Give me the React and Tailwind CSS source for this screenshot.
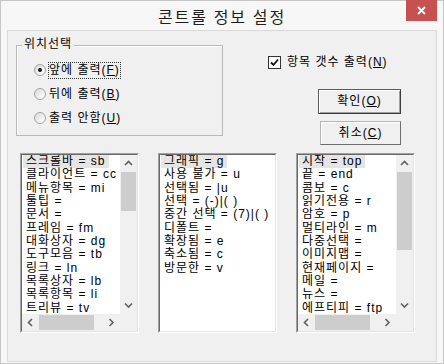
import React from "react";

const leftItems = [
  "스크롤바 = sb",
  "클라이언트 = cc",
  "메뉴항목 = mi",
  "툴팁 =",
  "문서 =",
  "프레임 = fm",
  "대화상자 = dg",
  "도구모음 = tb",
  "링크 = ln",
  "목록상자 = lb",
  "목록항목 = li",
  "트리뷰 = tv",
];

const midItems = [
  "그래픽 = g",
  "사용 불가 = u",
  "선택됨 = |u",
  "선택 = (-)|( )",
  "중간 선택 = (7)|( )",
  "디폴트 =",
  "확장됨 = e",
  "축소됨 = c",
  "방문한 = v",
];

const rightItems = [
  "시작 = top",
  "끝 = end",
  "콤보 = c",
  "읽기전용 = r",
  "암호 = p",
  "멀티라인 = m",
  "다중선택 =",
  "이미지맵 =",
  "현재페이지 =",
  "메일 =",
  "뉴스 =",
  "에프티피 = ftp",
];

// little chevrons for the scrollbar buttons
const Arrow = ({ dir }) => {
  const d = {
    up: "M1 5 L4.5 1.5 L8 5",
    down: "M1 1.5 L4.5 5 L8 1.5",
    left: "M5 1 L1.5 4.5 L5 8",
    right: "M1.5 1 L5 4.5 L1.5 8",
  }[dir];
  const vert = dir === "up" || dir === "down";
  return (
    <svg width={vert ? 9 : 7} height={vert ? 7 : 9} viewBox={vert ? "0 0 9 7" : "0 0 7 9"}>
      <path d={d} fill="none" stroke="#606060" strokeWidth="1.6" />
    </svg>
  );
};

const Accel = ({ pre, k }) => (
  <>
    {pre}(<u className="underline-offset-[1px]">{k}</u>)
  </>
);

const ListBox = ({ items, vThumb, hThumb }) => {
  const scroll = vThumb !== undefined;
  return (
    <div className="w-[119px] h-[180px] border border-t-[#a0a0a0] border-l-[#a0a0a0] border-r-[#ffffff] border-b-[#ffffff]">
      <div className="w-full h-full border border-t-[#696969] border-l-[#696969] border-r-[#e3e3e3] border-b-[#e3e3e3] bg-white flex flex-col">
        <div className="flex flex-1 min-h-0">
          <div className="flex-1 overflow-hidden">
            {items.map((t, i) => (
              <div key={t} className="h-[13.33px] leading-[13px] pl-[1px] whitespace-nowrap">
                <span className={`inline-block h-[13px] px-[3px] ${i === 0 ? "bg-[#e5e5e5]" : ""}`}>{t}</span>
              </div>
            ))}
          </div>
          {scroll && (
            <div className="w-[17px] flex flex-col bg-[#f0f0f0]">
              <div className="h-[17px] flex items-center justify-center">
                <Arrow dir="up" />
              </div>
              <div className="bg-[#cdcdcd] mx-[1px]" style={{ height: vThumb }} />
              <div className="flex-1" />
              <div className="h-[17px] flex items-center justify-center">
                <Arrow dir="down" />
              </div>
            </div>
          )}
        </div>
        {scroll && (
          <div className="h-[17px] flex">
            <div className="flex-1 flex bg-[#f0f0f0]">
              <div className="w-[17px] flex items-center justify-center">
                <Arrow dir="left" />
              </div>
              <div className="bg-[#cdcdcd] my-[1px]" style={{ width: hThumb }} />
              <div className="flex-1" />
              <div className="w-[17px] flex items-center justify-center">
                <Arrow dir="right" />
              </div>
            </div>
            <div className="w-[17px] bg-[#f0f0f0]" />
          </div>
        )}
      </div>
    </div>
  );
};

const Radio = ({ checked, focus, children }) => (
  <div className="h-[24px] flex items-center pl-[17px]">
    <div className="w-[12px] h-[12px] rounded-full border border-[#a2a2a2] bg-gradient-to-br from-[#dcdcdc] to-white flex items-center justify-center">
      {checked && <div className="w-[4px] h-[4px] rounded-full bg-[#1a1a1a]" />}
    </div>
    <span
      className={`ml-[2px] h-[17px] leading-[15px] border whitespace-nowrap ${
        focus ? "border-dotted border-[#333]" : "border-transparent"
      }`}
    >
      {children}
    </span>
  </div>
);

export default function App() {
  return (
    <div className="w-[444px] h-[364px] bg-[#f7f7f7] border border-[#c6c6c6] flex flex-col text-[12px] tracking-[1px] text-black font-['Liberation_Sans','Noto_Sans_CJK_KR',sans-serif]">
      {/* title bar */}
      <div className="h-[29px] relative flex items-center justify-center shrink-0">
        <span className="text-[16px] leading-[18px] tracking-[2px] font-['Noto_Sans_CJK_KR',sans-serif] text-[#1e1e1e]">
          콘트롤 정보 설정
        </span>
        <div className="absolute -top-px right-[6px] w-[31px] h-[21px] bg-[#c75050] flex items-center justify-center">
          <svg width="9" height="9" viewBox="0 0 9 9">
            <path d="M1 1 L8 8 M8 1 L1 8" stroke="#fff" strokeWidth="1.8" />
          </svg>
        </div>
      </div>

      {/* client area */}
      <div className="mx-[6px] w-[430px] h-[332px] border border-[#d9d9d9] bg-[#f0f0f0] flex flex-col">
        <div className="h-[122px] flex shrink-0">
          <div className="relative mt-[14px] ml-[8px] w-[207px] h-[91px] border border-[#b9b9b9] shadow-[inset_1px_1px_0_#fff]">
            <span className="absolute -top-[8px] left-[5px] px-[2px] bg-[#f0f0f0] leading-[13px]">위치선택</span>
            <div className="pt-[12px] flex flex-col">
              <Radio checked focus>
                <Accel pre="앞에 출력" k="F" />
              </Radio>
              <Radio>
                <Accel pre="뒤에 출력" k="B" />
              </Radio>
              <Radio>
                <Accel pre="출력 안함" k="U" />
              </Radio>
            </div>
          </div>

          <div className="ml-[45px] flex flex-col">
            <div className="mt-[25px] h-[13px] flex items-center">
              <div className="w-[13px] h-[13px] border border-[#333] bg-white flex items-center justify-center">
                <svg width="9" height="9" viewBox="0 0 9 9">
                  <path d="M1 4.5 L3.5 7 L8 1.5" fill="none" stroke="#111" strokeWidth="1.8" />
                </svg>
              </div>
              <span className="ml-[6px] leading-[15px] whitespace-nowrap">
                <Accel pre="항목 갯수 출력" k="N" />
              </span>
            </div>
            <div className="ml-[50px] mt-[20px] w-[83px] h-[25px] border border-[#5c5c5c] border-r-[#3c3c3c] border-b-[#3c3c3c] bg-[#f0f0f0] shadow-[inset_1px_1px_0_#fff,inset_-1px_-1px_0_#a0a0a0] flex items-center justify-center leading-[15px]">
              <Accel pre="확인" k="O" />
            </div>
            <div className="ml-[52px] mt-[7px] w-[81px] h-[24px] border border-[#b4b4b4] border-r-[#6e6e6e] border-b-[#6e6e6e] bg-[#f0f0f0] shadow-[inset_1px_1px_0_#fff] flex items-center justify-center leading-[15px]">
              <Accel pre="취소" k="C" />
            </div>
          </div>
        </div>

        <div className="ml-[12px] flex gap-[19px]">
          <ListBox items={leftItems} vThumb={39} hThumb={55} />
          <ListBox items={midItems} />
          <ListBox items={rightItems} vThumb={78} hThumb={55} />
        </div>
      </div>
    </div>
  );
}
